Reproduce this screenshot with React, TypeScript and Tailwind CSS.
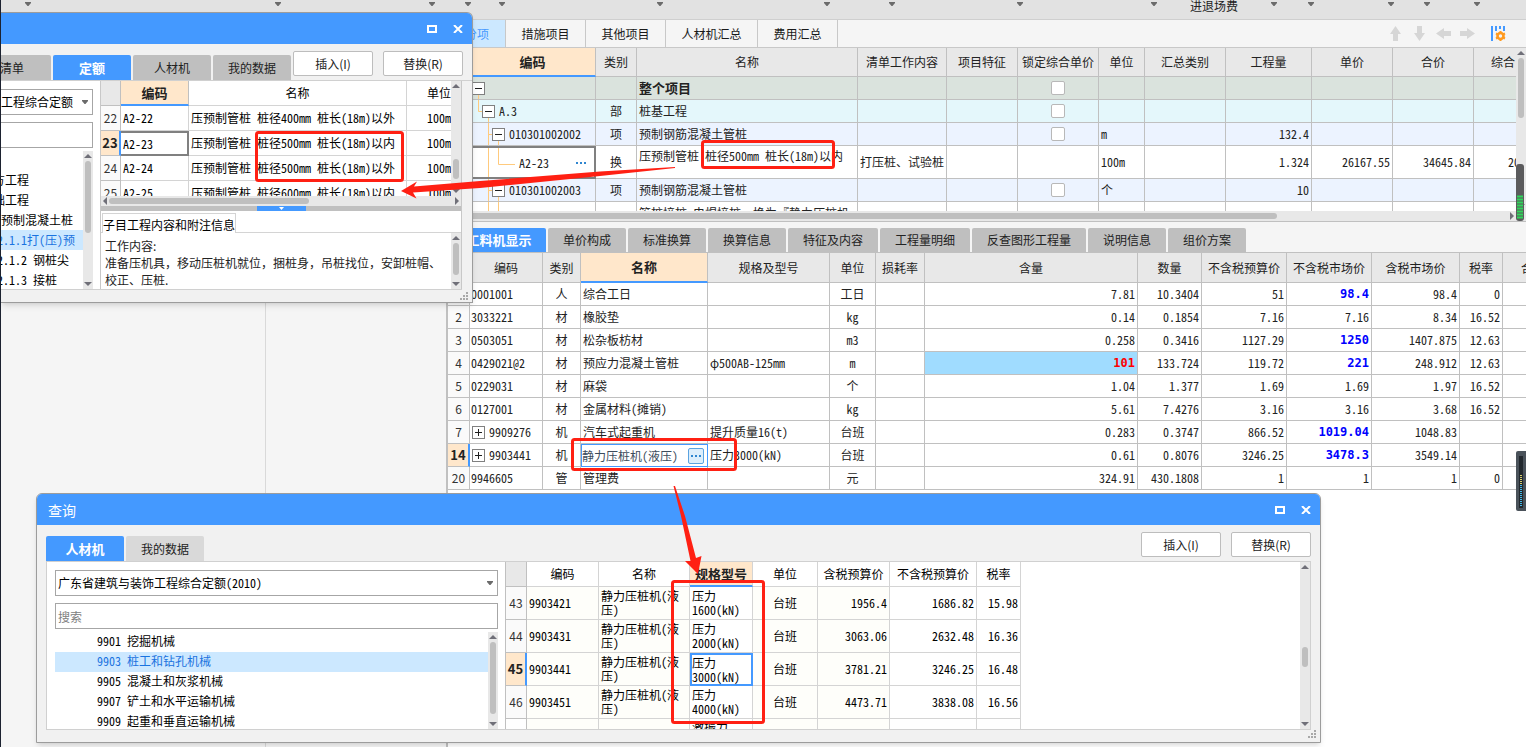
import clsx from "clsx"

const mainTabs = [
  { label: "措施项目", width: "w-20" },
  { label: "其他项目", width: "w-20" },
  { label: "人材机汇总", width: "w-[92px]" },
  { label: "费用汇总", width: "w-20" },
]

const detailTabs = [
  { label: "单价构成", width: "w-[78px]" },
  { label: "标准换算", width: "w-[78px]" },
  { label: "换算信息", width: "w-[78px]" },
  { label: "特征及内容", width: "w-[90px]" },
  { label: "工程量明细", width: "w-[90px]" },
  { label: "反查图形工程量", width: "w-[114px]" },
  { label: "说明信息", width: "w-[78px]" },
  { label: "组价方案", width: "w-[78px]" },
]

const projectRows = [
  {
    guide: "M8.5 17V23",
    box: "ml-0.5",
    code: "",
    kind: "",
    name: "整个项目",
    check: true,
    bg: "bg-[#dae3dd]",
    bold: true,
  },
  {
    guide: "M8.5 0V11.5H12M18.5 17V23",
    box: "ml-3",
    code: "A.3",
    kind: "部",
    name: "桩基工程",
    check: true,
    bg: "bg-[#e4f7fb]",
  },
  {
    guide: "M18.5 0V23M18.5 11.5H22M28.5 17V23",
    box: "ml-[22px]",
    code: "010301002002",
    kind: "项",
    name: "预制钢筋混凝土管桩",
    check: true,
    unit: "m",
    amount: "132.4",
    bg: "bg-[#ecf3ff]",
  },
  {
    guide: "M18.5 0V33M28.5 0V16.5H45",
    code: "A2-23",
    kind: "换",
    name: "压预制管桩 桩径500mm 桩长(18m)以内",
    content: "打压桩、试验桩",
    unit: "100m",
    amount: "1.324",
    price: "26167.55",
    total: "34645.84",
    extra: "20",
    bg: "bg-white",
    active: true,
  },
  {
    guide: "M18.5 0V23M18.5 11.5H22M28.5 17V23",
    box: "ml-[22px]",
    code: "010301002003",
    kind: "项",
    name: "预制钢筋混凝土管桩",
    check: true,
    unit: "个",
    amount: "10",
    bg: "bg-[#ecf3ff]",
  },
  {
    guide: "M18.5 0V23M28.5 0V23",
    code: "",
    kind: "",
    name: "管桩接桩 电焊接桩  换为『静力压桩机",
    bg: "bg-white",
  },
]

const resourceRows = [
  { no: "1", code: "0001001", kind: "人", name: "综合工日", unit: "工日", values: ["7.81", "10.3404", "51", "98.4", "98.4", "0"], blue: true },
  { no: "2", code: "3033221", kind: "材", name: "橡胶垫", unit: "kg", values: ["0.14", "0.1854", "7.16", "7.16", "8.34", "16.52"] },
  { no: "3", code: "0503051", kind: "材", name: "松杂板枋材", unit: "m3", values: ["0.258", "0.3416", "1127.29", "1250", "1407.875", "12.63"], blue: true },
  { no: "4", code: "0429021@2", kind: "材", name: "预应力混凝土管桩", spec: "φ500AB-125mm", unit: "m", values: ["101", "133.724", "119.72", "221", "248.912", "12.63"], blue: true, red: true },
  { no: "5", code: "0229031", kind: "材", name: "麻袋", unit: "个", values: ["1.04", "1.377", "1.69", "1.69", "1.97", "16.52"] },
  { no: "6", code: "0127001", kind: "材", name: "金属材料(摊销)", unit: "kg", values: ["5.61", "7.4276", "3.16", "3.16", "3.68", "16.52"] },
  { no: "7", code: "9909276", kind: "机", name: "汽车式起重机", spec: "提升质量16(t)", unit: "台班", values: ["0.283", "0.3747", "866.52", "1019.04", "1048.83", ""], blue: true, plus: true },
  { no: "14", code: "9903441", kind: "机", name: "静力压桩机(液压)", spec: "压力3000(kN)", unit: "台班", values: ["0.61", "0.8076", "3246.25", "3478.3", "3549.14", ""], blue: true, plus: true, active: true },
  { no: "20", code: "9946605", kind: "管", name: "管理费", unit: "元", values: ["324.91", "430.1808", "1", "1", "1", "0"] },
]

const quotaRows = [
  { no: "22", code: "A2-22", name: "压预制管桩 桩径400mm 桩长(18m)以外" },
  { no: "23", code: "A2-23", name: "压预制管桩 桩径500mm 桩长(18m)以内", active: true },
  { no: "24", code: "A2-24", name: "压预制管桩 桩径500mm 桩长(18m)以外" },
  { no: "25", code: "A2-25", name: "压预制管桩 桩径600mm 桩长(18m)以内" },
]

const chapters = [
  { label: "方工程", indent: "pl-0" },
  { label: "础工程", indent: "pl-0" },
  { label: "预制混凝土桩", indent: "pl-2" },
  { label: "2.1.1打(压)预", indent: "pl-1", active: true },
  { label: "2.1.2 钢桩尖", indent: "pl-1" },
  { label: "2.1.3 接桩", indent: "pl-1" },
]

const categories = [
  { code: "9901", label: "挖掘机械" },
  { code: "9903", label: "桩工和钻孔机械", active: true },
  { code: "9905", label: "混凝土和灰浆机械" },
  { code: "9907", label: "铲土和水平运输机械" },
  { code: "9909", label: "起重和垂直运输机械" },
]

const machineRows = [
  { no: "43", code: "9903421", power: "1600(kN)", gross: "1956.4", net: "1686.82", rate: "15.98" },
  { no: "44", code: "9903431", power: "2000(kN)", gross: "3063.06", net: "2632.48", rate: "16.36" },
  { no: "45", code: "9903441", power: "3000(kN)", gross: "3781.21", net: "3246.25", rate: "16.48", active: true },
  { no: "46", code: "9903451", power: "4000(kN)", gross: "4473.71", net: "3838.08", rate: "16.56" },
]

const tableClass =
  "w-full table-fixed border-separate border-spacing-0 whitespace-nowrap text-xs leading-4"

const cell = "overflow-hidden border-r border-b border-[#c0c0c0] p-0"
const lightCell = "overflow-hidden border-r border-b border-[#d4d4d4] p-0"
const strongNumber = "font-['DejaVu_Sans_Mono',monospace] font-bold"

const Caret = ({ className = "" }) => (
  <svg viewBox="0 0 6 4" className={clsx("h-1 w-1.5 shrink-0 fill-[#6b6b6b]", className)}>
    <path d="M0 0H6V1L3.5 4H2.5L0 1Z" />
  </svg>
)

const ScrollArrow = ({ turn = "" }) => (
  <svg viewBox="0 0 8 4" className={clsx("h-1 w-2 shrink-0 fill-[#6f6f78]", turn)}>
    <path d="M4 0L8 4H0Z" />
  </svg>
)

const VScroll = ({ thumb = "", className = "" }) => (
  <div
    className={clsx(
      "flex w-2.5 shrink-0 flex-col items-center justify-between bg-[#e8e8e8] py-[3px]",
      className
    )}
  >
    <ScrollArrow />
    <div className="w-1.5 flex-1 py-[3px]">
      <div className={clsx("w-1.5 rounded-full bg-[#bfbfbf]", thumb)} />
    </div>
    <ScrollArrow turn="rotate-180" />
  </div>
)

const HScroll = ({ thumb = "" }) => (
  <div className="flex h-2.5 w-full shrink-0 items-center bg-[#e8e8e8]">
    <ScrollArrow turn="-rotate-90" />
    <div className="flex-1">
      <div className={clsx("h-1.5 rounded-full bg-[#bfbfbf]", thumb)} />
    </div>
    <ScrollArrow turn="rotate-90" />
  </div>
)

const RowNumber = ({ no, active = false }) => (
  <td
    className={clsx(
      "border-b border-b-[#c0c0c0] p-0 text-center [font-feature-settings:normal]",
      active
        ? "border-r-2 border-r-[#4499ff] bg-[#ffe7cb] text-[13px] font-bold text-[#222]"
        : "border-r border-r-[#c0c0c0] bg-[#fafafa] text-[#333]"
    )}
  >
    {no}
  </td>
)

const Toggle = ({ open = false, className = "" }) => (
  <button
    type="button"
    aria-label={open ? "折叠" : "展开"}
    className={clsx(
      "relative flex h-[13px] w-[13px] shrink-0 items-center justify-center border border-[#808080] bg-white",
      className
    )}
  >
    <svg viewBox="0 0 9 9" className="h-[9px] w-[9px] stroke-[#202020]" fill="none">
      <path d={open ? "M1 4.5H8" : "M1 4.5H8M4.5 1V8"} />
    </svg>
  </button>
)

const DialogTitle = ({ title = "" }) => (
  <div className="flex h-[31px] shrink-0 items-center bg-[#4499ff] pr-[9px] pl-[11px] text-white">
    <h2 className="flex-1 text-sm leading-4">{title}</h2>
    <button type="button" aria-label="最大化" className="mr-4">
      <svg viewBox="0 0 10 8" className="h-2 w-2.5" fill="none" stroke="white" strokeWidth="2">
        <path d="M1 1H9V7H1Z" />
      </svg>
    </button>
    <button type="button" aria-label="关闭">
      <svg viewBox="0 0 10 8" className="h-2 w-2.5" fill="none" stroke="white" strokeWidth="2">
        <path d="M1 0L9 8M9 0L1 8" />
      </svg>
    </button>
  </div>
)

const DialogButton = ({ children }) => (
  <button
    type="button"
    className="mt-[7px] h-[25px] w-20 shrink-0 self-start rounded-xs border border-[#bdbdbd] bg-white text-xs text-[#222] [font-feature-settings:normal]"
  >
    {children}
  </button>
)

const DialogTab = ({ label, active = false, tone = "bg-[#bfbfbf]", className = "" }) => (
  <button
    type="button"
    className={clsx(
      "h-[25px] w-[78px] shrink-0 rounded-t-xs",
      active ? "bg-[#4499ff] text-[13px] font-bold text-white" : clsx(tone, "text-xs text-[#222]"),
      className
    )}
  >
    {label}
  </button>
)

const Grip = () => (
  <svg viewBox="0 0 8 8" className="h-2 w-2 fill-[#a8a8a8]">
    <path d="M6 0H8V2H6ZM3 3H5V5H3ZM6 3H8V5H6ZM0 6H2V8H0ZM3 6H5V8H3ZM6 6H8V8H6Z" />
  </svg>
)

const Ribbon = () => (
  <div className="grid h-5 shrink-0 grid-cols-[31px_250px_154px_36px_34px_158px_167px_65px_128px_134px_120px_37px_80px_36px_50px] items-start border-b border-[#cfcfcf] bg-[#e2e2e2]">
    {[0, 1, 2, 3, 4, 5, 6, 7, 8, 9].map((n) => (
      <button key={n} type="button" aria-label="更多" className="flex h-2 items-center justify-end">
        <Caret />
      </button>
    ))}
    <button type="button" className="flex h-3 items-center justify-between pl-[33px] text-xs leading-3 text-[#222]">
      进退场费
      <Caret className="mb-1" />
    </button>
    {[11, 12, 13, 14].map((n) => (
      <button key={n} type="button" aria-label="更多" className="flex h-2 items-center justify-end">
        <Caret />
      </button>
    ))}
  </div>
)

const MoveArrow = ({ label, turn = "" }) => (
  <button type="button" aria-label={label} className="flex w-6 justify-center">
    <svg viewBox="0 0 15 15" className={clsx("h-[15px] w-[15px] fill-[#d6d6d6]", turn)}>
      <path d="M7.5 0L13 8H10V15H5V8H2Z" />
    </svg>
  </button>
)

const MainTabs = () => (
  <div className="flex h-7 shrink-0 border-b border-[#c8c8c8] text-xs text-[#1a1a1a]">
    <button
      type="button"
      className="flex w-[58px] items-center justify-end overflow-hidden border-r border-[#c8c8c8] bg-[#cce8ff] pr-4 whitespace-nowrap text-[#4499ff]"
    >
      分部分项
    </button>
    {mainTabs.map((tab) => (
      <button key={tab.label} type="button" className={clsx("shrink-0 border-r border-[#c8c8c8]", tab.width)}>
        {tab.label}
      </button>
    ))}
    <div className="ml-auto flex items-center pr-5">
      <MoveArrow label="上移" />
      <MoveArrow label="下移" turn="rotate-180" />
      <MoveArrow label="左移" turn="-rotate-90" />
      <MoveArrow label="右移" turn="rotate-90" />
      <button type="button" aria-label="列设置" className="ml-3">
        <svg viewBox="0 0 15 16" className="h-4 w-[15px]">
          <path d="M0 0H2V15H0ZM4 0H6V5H4ZM8 0H10V3H8ZM12 0H14V5H12Z" fill="#4499ff" />
          <circle cx="9.5" cy="10" r="3" fill="none" stroke="#ff9a1f" strokeWidth="2.6" />
          <path
            d="M9.5 5V7M9.5 13V15M5 7.5L7 8.5M12 11.5L14 12.5M5 12.5L7 11.5M12 8.5L14 7.5"
            stroke="#ff9a1f"
            strokeWidth="2"
          />
        </svg>
      </button>
    </div>
  </div>
)

const ProjectTable = () => (
  <table className={clsx(tableClass, "text-[#222]")}>
    <colgroup>
      <col className="w-[22px]" />
      <col className="w-[126px]" />
      <col className="w-[41px]" />
      <col />
      <col className="w-[89px]" />
      <col className="w-[71px]" />
      <col className="w-[81px]" />
      <col className="w-[46px]" />
      <col className="w-[81px]" />
      <col className="w-[86px]" />
      <col className="w-[81px]" />
      <col className="w-[81px]" />
      <col className="w-[42px]" />
    </colgroup>
    <thead>
      <tr className="h-[29px] bg-[#e8e8e8]">
        <th className={cell} />
        <th className="border-r border-b-2 border-r-[#c0c0c0] border-b-[#4499ff] bg-[#ffe7cb] p-0 text-[13px]">
          编码
        </th>
        {["类别", "名称", "清单工作内容", "项目特征", "锁定综合单价", "单位", "汇总类别", "工程量", "单价", "合价"].map(
          (label) => (
            <th key={label} className={clsx(cell, "font-normal")}>
              {label}
            </th>
          )
        )}
        <th className="overflow-hidden border-b border-[#c0c0c0] p-0 pl-[17px] text-left font-normal">综合</th>
      </tr>
    </thead>
    <tbody>
      {projectRows.map((row, i) => (
        <tr key={i} className={clsx(row.active ? "h-[33px]" : "h-[23px]", row.bg)}>
          <td className={clsx(cell, "bg-[#e8e8e8]")} />
          <td
            className={clsx(
              "relative overflow-hidden p-0",
              row.active ? "border-2 border-l-0 border-[#808080]" : "border-r border-b border-[#c0c0c0]"
            )}
          >
            <svg className="absolute top-0 left-0 h-full w-12 stroke-[#ffca7d]" fill="none">
              <path d={row.guide} />
            </svg>
            <div className="relative flex items-center">
              {row.box && <Toggle open className={row.box} />}
              <span className={row.box ? "pl-1" : "pl-[49px]"}>{row.code}</span>
              {row.active && (
                <button type="button" aria-label="选择" className="mr-2 ml-auto">
                  <svg viewBox="0 0 10 2" className="h-0.5 w-2.5 fill-[#2f86d0]">
                    <path d="M0 0H2V2H0ZM4 0H6V2H4ZM8 0H10V2H8Z" />
                  </svg>
                </button>
              )}
            </div>
          </td>
          <td className={clsx(cell, "text-center")}>{row.kind}</td>
          <td className={clsx(cell, "pl-0.5 whitespace-pre", row.bold && "text-[13px] font-bold", row.active && "pb-3")}>
            {row.name}
          </td>
          <td className={clsx(cell, "pl-0.5")}>{row.content}</td>
          <td className={cell} />
          <td className={cell}>
            {row.check && (
              <input
                type="checkbox"
                aria-label="锁定综合单价"
                className="mx-auto block h-3.5 w-3.5 appearance-none rounded-xs border border-[#b8b8b8] bg-white"
              />
            )}
          </td>
          <td className={clsx(cell, "pl-0.5")}>{row.unit}</td>
          <td className={cell} />
          <td className={clsx(cell, "pr-0.5 text-right")}>{row.amount}</td>
          <td className={clsx(cell, "pr-0.5 text-right")}>{row.price}</td>
          <td className={clsx(cell, "pr-0.5 text-right")}>{row.total}</td>
          <td className="overflow-hidden border-b border-[#c0c0c0] p-0 pl-[34px]">{row.extra}</td>
        </tr>
      ))}
    </tbody>
  </table>
)

const ResourceTable = () => (
  <table className={clsx(tableClass, "bg-white text-[#222]")}>
    <colgroup>
      <col className="w-[22px]" />
      <col className="w-[73px]" />
      <col className="w-[38px]" />
      <col className="w-[127px]" />
      <col className="w-[122px]" />
      <col className="w-[46px]" />
      <col className="w-[49px]" />
      <col />
      <col className="w-16" />
      <col className="w-[85px]" />
      <col className="w-[85px]" />
      <col className="w-[88px]" />
      <col className="w-[43px]" />
      <col className="w-[23px]" />
    </colgroup>
    <thead>
      <tr className="h-[30px] bg-[#e8e8e8]">
        <th className={cell} />
        <th className={clsx(cell, "font-normal")}>编码</th>
        <th className={clsx(cell, "font-normal")}>类别</th>
        <th className="border-r border-b-2 border-r-[#c0c0c0] border-b-[#4499ff] bg-[#ffe7cb] p-0 text-[13px]">
          名称
        </th>
        {["规格及型号", "单位", "损耗率", "含量", "数量", "不含税预算价", "不含税市场价", "含税市场价", "税率"].map(
          (label) => (
            <th key={label} className={clsx(cell, "font-normal")}>
              {label}
            </th>
          )
        )}
        <th className="overflow-hidden border-b border-[#c0c0c0] p-0 pl-[18px] text-left font-normal">合</th>
      </tr>
    </thead>
    <tbody>
      {resourceRows.map((row) => (
        <tr key={row.no} className="h-[23px]">
          <RowNumber no={row.no} active={row.active} />
          <td className={cell}>
            <div className="flex items-center">
              {row.plus && <Toggle className="ml-0.5" />}
              <span className={row.plus ? "pl-1" : "pl-px"}>{row.code}</span>
            </div>
          </td>
          <td className={clsx(cell, "text-center")}>{row.kind}</td>
          <td className={row.active ? "border border-[#4499ff] p-0" : clsx(cell, "pl-0.5")}>
            {row.active ? (
              <div className="flex items-center">
                <input
                  aria-label="名称"
                  defaultValue={row.name}
                  className="h-4 w-full min-w-0 bg-transparent text-[#3c4c5c] outline-none [font-feature-settings:'hwid']"
                />
                <button
                  type="button"
                  aria-label="选择"
                  className="mr-[3px] flex h-4 w-4 shrink-0 items-center justify-center rounded-xs border border-[#5ba3e0] bg-[#dceefc]"
                >
                  <svg viewBox="0 0 10 2" className="h-0.5 w-2.5 fill-[#2f86d0]">
                    <path d="M0 0H2V2H0ZM4 0H6V2H4ZM8 0H10V2H8Z" />
                  </svg>
                </button>
              </div>
            ) : (
              row.name
            )}
          </td>
          <td className={clsx(cell, "pl-0.5")}>{row.spec}</td>
          <td className={clsx(cell, "text-center")}>{row.unit}</td>
          <td className={cell} />
          {row.values.map((value, i) => (
            <td
              key={i}
              className={clsx(
                cell,
                "pr-0.5 text-right",
                row.blue && i === 3 && clsx(strongNumber, "text-[#0000ff]"),
                row.red && i === 0 && clsx(strongNumber, "bg-[#a0dcff] text-[#ff0000]")
              )}
            >
              {value}
            </td>
          ))}
          <td className="border-b border-[#c0c0c0] p-0" />
        </tr>
      ))}
    </tbody>
  </table>
)

const Workspace = () => (
  <main className="flex min-h-0 flex-1">
    <aside className="flex w-[448px] shrink-0 border-r-2 border-[#c0c0c0]">
      <div className="w-[266px] border-r border-[#d9d9d9]" />
    </aside>
    <section className="flex min-w-0 flex-1 flex-col">
      <MainTabs />
      <div className="flex h-[163px] shrink-0 overflow-hidden">
        <div className="min-w-0 flex-1">
          <ProjectTable />
        </div>
        <VScroll thumb="h-15" />
      </div>
      <div className="flex shrink-0 border-b border-[#c0c0c0] bg-[#e8e8e8] pr-2.5">
        <HScroll thumb="w-[78%]" />
      </div>
      <div className="flex shrink-0 gap-0.5 border-b border-[#c0c0c0] pt-1.5 pl-1">
        <button type="button" className="h-6 w-[94px] rounded-t-xs bg-[#4499ff] text-[13px] font-bold text-white">
          工料机显示
        </button>
        {detailTabs.map((tab) => (
          <button
            key={tab.label}
            type="button"
            className={clsx("h-6 shrink-0 rounded-t-xs bg-[#bfbfbf] text-xs text-[#222]", tab.width)}
          >
            {tab.label}
          </button>
        ))}
      </div>
      <div className="flex-1 bg-white">
        <ResourceTable />
      </div>
    </section>
  </main>
)

const QuotaDialog = () => (
  <div
    role="dialog"
    aria-label="定额"
    className="absolute top-3 left-px flex h-[291px] w-[472px] flex-col overflow-hidden rounded-tr-md border border-l-0 border-[#9c9c9c] bg-[#f1f1f1] shadow-md"
  >
    <DialogTitle />
    <div className="flex h-[37px] shrink-0 items-end gap-0.5 border-b border-[#d0d0d0]">
      <DialogTab label="清单" className="-ml-7" />
      <DialogTab label="定额" active />
      <DialogTab label="人材机" />
      <DialogTab label="我的数据" />
      <div className="flex gap-2.5 self-start">
        <DialogButton>插入(I)</DialogButton>
        <DialogButton>替换(R)</DialogButton>
      </div>
    </div>
    <div className="mr-2.5 flex h-[209px] border-b border-[#d0d0d0] bg-white">
      <div className="flex w-[99px] shrink-0 flex-col pt-2 pr-[7px]">
        <div className="relative">
          <select
            aria-label="定额库"
            className="block h-[26px] w-full appearance-none border border-l-0 border-[#a6a6a6] bg-white text-xs"
          >
            <option>工程综合定额</option>
          </select>
          <Caret className="pointer-events-none absolute top-[11px] right-[5px]" />
        </div>
        <input aria-label="搜索定额" className="mt-[7px] h-[26px] w-full border border-l-0 border-[#a6a6a6] bg-white" />
        <div className="mt-[3px] flex min-h-0 flex-1">
          <ul className="min-w-0 flex-1 overflow-hidden pt-[19px] text-xs leading-5 whitespace-nowrap">
            {chapters.map((item) => (
              <li key={item.label} className={clsx("-ml-2", item.indent, item.active && "bg-[#cce8ff] text-[#1a73e0]")}>
                {item.label}
              </li>
            ))}
          </ul>
          <VScroll thumb="h-[72px]" />
        </div>
      </div>
      <div className="flex min-w-0 flex-1 flex-col border-x border-[#c8c8c8]">
        <div className="flex h-[115px] shrink-0 overflow-hidden">
          <div className="min-w-0 flex-1">
            <table className={tableClass}>
              <colgroup>
                <col className="w-5" />
                <col className="w-[68px]" />
                <col />
                <col className="w-11" />
              </colgroup>
              <thead>
                <tr className="h-[25px]">
                  <th className={clsx(cell, "bg-[#e8e8e8]")} />
                  <th className="border-r border-b-2 border-r-[#c0c0c0] border-b-[#4499ff] bg-[#ffe7cb] p-0 text-[13px] text-[#222]">
                    编码
                  </th>
                  <th className={clsx(lightCell, "font-normal")}>名称</th>
                  <th className="border-b border-[#d4d4d4] p-0 text-right font-normal">单位</th>
                </tr>
              </thead>
              <tbody>
                {quotaRows.map((row) => (
                  <tr key={row.no} className="h-[25px]">
                    <RowNumber no={row.no} active={row.active} />
                    <td
                      className={clsx(
                        "p-0 pl-0.5",
                        row.active ? "border-2 border-l-0 border-[#808080]" : "border-r border-b border-[#d4d4d4]"
                      )}
                    >
                      {row.code}
                    </td>
                    <td className={clsx(lightCell, "pl-0.5")}>{row.name}</td>
                    <td className="border-b border-[#d4d4d4] p-0 text-right">100m</td>
                  </tr>
                ))}
              </tbody>
            </table>
          </div>
          <VScroll thumb="mt-[68px] h-5" />
        </div>
        <HScroll thumb="w-[200px]" />
        <div className="flex h-[5px] shrink-0 justify-center bg-[#c0c0c0]">
          <div className="flex w-[49px] items-center justify-center bg-[#4499ff]">
            <svg viewBox="0 0 5 3" className="h-[3px] w-[5px] fill-white">
              <path d="M0 0H5L2.5 3Z" />
            </svg>
          </div>
        </div>
        <div className="flex h-[22px] shrink-0 items-end border-b border-[#d4d4d4] pl-px">
          <h3 className="-mb-px h-5 border border-b-0 border-[#d4d4d4] bg-white text-xs leading-[22px]">
            子目工程内容和附注信息
          </h3>
        </div>
        <div className="flex min-h-0 flex-1">
          <p className="flex-1 overflow-hidden pt-1 pl-1 text-xs leading-[17px] text-[#222] [font-feature-settings:normal]">
            工作内容:
            <br />
            准备压机具，移动压桩机就位，捆桩身，吊桩找位，安卸桩帽、
            <br />
            校正、压桩.
          </p>
          <VScroll thumb="h-8" />
        </div>
      </div>
    </div>
    <div className="flex flex-1 items-end justify-end pr-1 pb-0.5">
      <Grip />
    </div>
  </div>
)

const QueryDialog = () => (
  <div
    role="dialog"
    aria-label="查询"
    className="absolute top-[493px] left-9 flex h-[250px] w-[1285px] flex-col overflow-hidden rounded-t-md border border-[#9c9c9c] bg-[#f1f1f1] shadow-md"
  >
    <DialogTitle title="查询" />
    <div className="flex h-9 shrink-0 items-end gap-0.5 px-[9px]">
      <DialogTab label="人材机" active />
      <DialogTab label="我的数据" tone="bg-[#d9d9d9]" />
      <div className="ml-auto flex gap-2.5 self-start">
        <DialogButton>插入(I)</DialogButton>
        <DialogButton>替换(R)</DialogButton>
      </div>
    </div>
    <div className="mx-[9px] flex h-[169px] border border-[#d0d0d0] bg-white">
      <div className="flex w-[458px] shrink-0 flex-col px-2 pt-2 pr-[7px]">
        <div className="relative">
          <select
            aria-label="定额库"
            className="block h-[26px] w-full appearance-none border border-[#a6a6a6] bg-white pl-0.5 text-xs [font-feature-settings:'hwid']"
          >
            <option>广东省建筑与装饰工程综合定额(2010)</option>
          </select>
          <Caret className="pointer-events-none absolute top-[11px] right-[5px]" />
        </div>
        <input
          aria-label="搜索"
          placeholder="搜索"
          className="mt-[7px] h-[26px] w-full border border-[#a6a6a6] bg-white pl-0.5 text-xs placeholder:text-[#808080]"
        />
        <div className="mt-[3px] flex min-h-0 flex-1">
          <ul className="min-w-0 flex-1 overflow-hidden text-xs leading-[18px]">
            {categories.map((item) => (
              <li key={item.code} className={clsx("h-5 pl-[42px]", item.active && "bg-[#cce8ff] text-[#1a73e0]")}>
                {item.code} {item.label}
              </li>
            ))}
          </ul>
          <VScroll thumb="h-[72px]" />
        </div>
      </div>
      <div className="w-[516px] shrink-0 overflow-hidden border-l border-[#c0c0c0]">
        <table className={tableClass}>
          <colgroup>
            <col className="w-[21px]" />
            <col className="w-[72px]" />
            <col className="w-[91px]" />
            <col className="w-[63px]" />
            <col className="w-[65px]" />
            <col className="w-[72px]" />
            <col />
            <col className="w-11" />
          </colgroup>
          <thead>
            <tr className="h-[25px]">
              <th className={clsx(cell, "bg-[#e8e8e8]")} />
              <th className={clsx(lightCell, "font-normal")}>编码</th>
              <th className={clsx(lightCell, "font-normal")}>名称</th>
              <th className="border-r border-b-2 border-r-[#d4d4d4] border-b-[#4499ff] bg-[#ffe7cb] p-0 text-[13px] text-[#222]">
                规格型号
              </th>
              {["单位", "含税预算价", "不含税预算价", "税率"].map((label) => (
                <th key={label} className={clsx(lightCell, "font-normal")}>
                  {label}
                </th>
              ))}
            </tr>
          </thead>
          <tbody>
            {machineRows.map((row) => (
              <tr key={row.no} className="h-[33px]">
                <RowNumber no={row.no} active={row.active} />
                <td className={clsx(lightCell, "bg-[#fefefa] pl-0.5")}>{row.code}</td>
                <td className={clsx(lightCell, "bg-[#fefefa] pl-0.5 leading-[14px]")}>
                  静力压桩机(液
                  <br />
                  压)
                </td>
                <td
                  className={clsx(
                    "leading-[14px]",
                    row.active ? "border-2 border-[#4499ff] p-0" : "border-r border-b border-[#d4d4d4] p-0 pl-0.5"
                  )}
                >
                  压力
                  <br />
                  {row.power}
                </td>
                <td className={clsx(lightCell, "bg-[#fefefa] text-center")}>台班</td>
                <td className={clsx(lightCell, "bg-[#fefefa] pr-0.5 text-right")}>{row.gross}</td>
                <td className={clsx(lightCell, "pr-0.5 text-right")}>{row.net}</td>
                <td className={clsx(lightCell, "pr-0.5 text-right")}>{row.rate}</td>
              </tr>
            ))}
            <tr className="h-[33px]">
              <td className={cell} />
              <td className={clsx(lightCell, "bg-[#fefefa]")} />
              <td className={clsx(lightCell, "bg-[#fefefa]")} />
              <td className={clsx(lightCell, "pl-0.5 align-top")}>激振力</td>
              <td className={clsx(lightCell, "bg-[#fefefa]")} />
              <td className={clsx(lightCell, "bg-[#fefefa]")} />
              <td className={lightCell} />
              <td className={lightCell} />
            </tr>
          </tbody>
        </table>
      </div>
      <VScroll className="ml-auto" thumb="mt-[75px] h-5" />
    </div>
    <div className="flex flex-1 items-end justify-end pr-1 pb-1">
      <Grip />
    </div>
  </div>
)

// red boxes and arrows that link the matching quota rows
const Marks = () => (
  <svg className="pointer-events-none absolute top-0 left-0 h-[747px] w-[1526px]" fill="none">
    <g stroke="#ff2013" strokeWidth="3">
      <rect x="256.5" y="132.5" width="146" height="48" rx="2" />
      <rect x="702.5" y="141.5" width="131" height="26" rx="2" />
      <rect x="572.5" y="439.5" width="163" height="30" rx="2" />
      <rect x="672.5" y="581.5" width="91" height="141" rx="2" />
    </g>
    <g fill="#ff2013">
      <path d="M401 191L417 181.5L414 186.5L480 181L600 171.5L675 167L675 168L600 176L480 188L413 192.5L416.5 198.5Z" />
      <path d="M673.5 486L675 486L685 516L696 558L701.5 556L698 574L685 561L690.5 561L681 516Z" />
    </g>
  </svg>
)

const LevelMeter = () => (
  <svg className="absolute top-[164px] right-0.5 h-[57px] w-2">
    <rect width="8" height="57" rx="3" fill="#5b5b5d" />
    <path
      d="M1 32.5H7M1 35.5H7M1 38.5H7M1 41.5H7M1 44.5H7M1 47.5H7M1 50.5H7M1 53.5H7"
      stroke="#2fd65b"
      strokeWidth="2"
    />
  </svg>
)

const SideMeter = () => (
  <svg className="absolute top-[451px] right-0 h-[60px] w-2.5">
    <rect width="12" height="60" rx="2" fill="#4a525a" />
    <rect x="3" y="5" width="4" height="52" fill="#22282e" />
    <path d="M5 24V34" stroke="#d8d070" strokeWidth="2" strokeDasharray="1 1" />
    <path d="M5 34V56" stroke="#45b8e8" strokeWidth="2" strokeDasharray="1 1" />
  </svg>
)

export default function App() {
  return (
    <div className="relative flex h-screen flex-col overflow-hidden bg-[#f5f5f5] font-['Noto_Sans_CJK_SC',sans-serif] text-black [font-feature-settings:'hwid']">
      <Ribbon />
      <Workspace />
      <LevelMeter />
      <SideMeter />
      <QuotaDialog />
      <QueryDialog />
      <div className="absolute top-0 left-0 h-full w-px bg-[#1c2230]" />
      <Marks />
    </div>
  )
}
